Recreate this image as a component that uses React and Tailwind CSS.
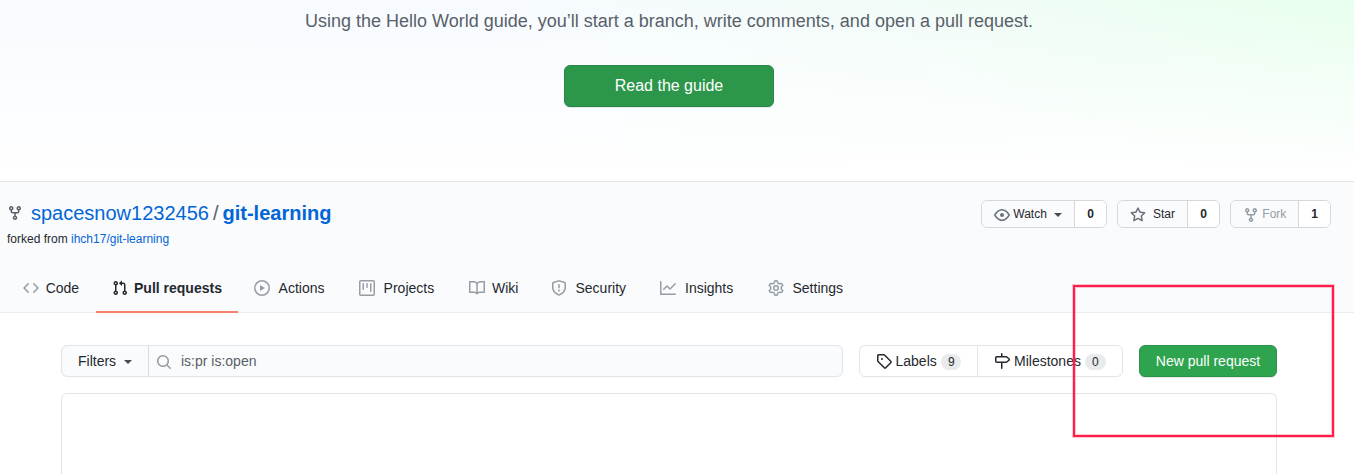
const icons = {
  fork: "M5 3.25a.75.75 0 11-1.5 0 .75.75 0 011.5 0zm0 2.122a2.25 2.25 0 10-1.5 0v.878A2.25 2.25 0 005.75 8.5h1.5v2.128a2.251 2.251 0 101.5 0V8.5h1.5a2.25 2.25 0 002.25-2.25v-.878a2.25 2.25 0 10-1.5 0v.878a.75.75 0 01-.75.75h-4.5A.75.75 0 015 6.25v-.878zm3.75 7.378a.75.75 0 11-1.5 0 .75.75 0 011.5 0zm3-8.75a.75.75 0 100-1.5.75.75 0 000 1.5z",
  code: "M4.72 3.22a.75.75 0 011.06 1.06L2.06 8l3.72 3.72a.75.75 0 11-1.06 1.06L.47 8.53a.75.75 0 010-1.06l4.25-4.25zm6.56 0a.75.75 0 10-1.06 1.06L13.94 8l-3.72 3.72a.75.75 0 101.06 1.06l4.25-4.25a.75.75 0 000-1.06l-4.25-4.25z",
  pull: "M7.177 3.073L9.573.677A.25.25 0 0110 .854v4.792a.25.25 0 01-.427.177L7.177 3.427a.25.25 0 010-.354zM3.75 2.5a.75.75 0 100 1.5.75.75 0 000-1.5zm-2.25.75a2.25 2.25 0 113 2.122v5.256a2.251 2.251 0 11-1.5 0V5.372A2.25 2.25 0 011.5 3.25zM11 2.5h-1V4h1a1 1 0 011 1v5.628a2.251 2.251 0 101.5 0V5A2.5 2.5 0 0011 2.5zm1 10.25a.75.75 0 111.5 0 .75.75 0 01-1.5 0zM3.75 12a.75.75 0 100 1.5.75.75 0 000-1.5z",
  play: "M1.5 8a6.5 6.5 0 1113 0 6.5 6.5 0 01-13 0zM8 0a8 8 0 100 16A8 8 0 008 0zM6.379 5.227A.25.25 0 006 5.442v5.117a.25.25 0 00.379.214l4.264-2.559a.25.25 0 000-.428L6.379 5.227z",
  project: "M1.75 0A1.75 1.75 0 000 1.75v12.5C0 15.216.784 16 1.75 16h12.5A1.75 1.75 0 0016 14.25V1.75A1.75 1.75 0 0014.25 0H1.75zM1.5 1.75a.25.25 0 01.25-.25h12.5a.25.25 0 01.25.25v12.5a.25.25 0 01-.25.25H1.75a.25.25 0 01-.25-.25V1.75zM11.75 3a.75.75 0 00-.75.75v7.5a.75.75 0 001.5 0v-7.5a.75.75 0 00-.75-.75zm-8.25.75a.75.75 0 011.5 0v5.5a.75.75 0 01-1.5 0v-5.5zM8 3a.75.75 0 00-.75.75v3.5a.75.75 0 001.5 0v-3.5A.75.75 0 008 3z",
  book: "M0 1.75A.75.75 0 01.75 1h4.253c1.227 0 2.317.59 3 1.501A3.744 3.744 0 0111.006 1h4.245a.75.75 0 01.75.75v10.5a.75.75 0 01-.75.75h-4.507a2.25 2.25 0 00-1.591.659l-.622.621a.75.75 0 01-1.06 0l-.622-.621A2.25 2.25 0 005.258 13H.75a.75.75 0 01-.75-.75V1.75zm8.755 3a2.25 2.25 0 012.25-2.25H14.5v9h-3.757c-.71 0-1.4.201-1.992.572l.004-7.322zm-1.504 7.324l.004-5.073-.002-2.253A2.25 2.25 0 005.003 2.5H1.5v9h3.757a3.75 3.75 0 011.994.574z",
  shield: "M7.467.133a1.75 1.75 0 011.066 0l5.25 1.68A1.75 1.75 0 0115 3.48V7c0 1.566-.32 3.182-1.303 4.682-.983 1.498-2.585 2.813-5.032 3.855a1.7 1.7 0 01-1.33 0c-2.447-1.042-4.049-2.357-5.032-3.855C1.32 10.182 1 8.566 1 7V3.48a1.75 1.75 0 011.217-1.667l5.25-1.68zm.61 1.429a.25.25 0 00-.153 0l-5.25 1.68a.25.25 0 00-.174.238V7c0 1.358.275 2.666 1.057 3.86.784 1.194 2.121 2.34 4.366 3.297a.2.2 0 00.154 0c2.245-.956 3.582-2.104 4.366-3.298C13.225 9.666 13.5 8.36 13.5 7V3.48a.25.25 0 00-.174-.237l-5.25-1.68zM9 10.5a1 1 0 11-2 0 1 1 0 012 0zm-.25-5.75a.75.75 0 10-1.5 0v3a.75.75 0 001.5 0v-3z",
  graph: "M1.5 1.75a.75.75 0 00-1.5 0v12.5c0 .414.336.75.75.75h14.5a.75.75 0 000-1.5H1.5V1.75zm14.28 2.53a.75.75 0 00-1.06-1.06L10 7.94 7.53 5.47a.75.75 0 00-1.06 0L3.22 8.72a.75.75 0 001.06 1.06L7 7.06l2.47 2.47a.75.75 0 001.06 0l5.25-5.25z",
  gear: "M7.429 1.525a6.593 6.593 0 011.142 0c.036.003.108.036.137.146l.289 1.105c.147.56.55.967.997 1.189.174.086.341.183.501.29.417.278.97.423 1.53.27l1.102-.303c.11-.03.175.016.195.046.219.31.41.641.573.989.014.031.022.11-.059.19l-.815.806c-.411.406-.562.957-.53 1.456a4.588 4.588 0 010 .582c-.032.499.119 1.05.53 1.456l.815.806c.08.08.073.159.059.19a6.494 6.494 0 01-.573.99c-.02.029-.086.074-.195.045l-1.103-.303c-.559-.153-1.112-.008-1.529.27-.16.107-.327.204-.5.29-.449.222-.851.628-.998 1.189l-.289 1.105c-.029.11-.101.143-.137.146a6.613 6.613 0 01-1.142 0c-.036-.003-.108-.037-.137-.146l-.289-1.105c-.147-.56-.55-.967-.997-1.189a4.502 4.502 0 01-.501-.29c-.417-.278-.97-.423-1.53-.27l-1.102.303c-.11.03-.175-.016-.195-.046a6.492 6.492 0 01-.573-.989c-.014-.031-.022-.11.059-.19l.815-.806c.411-.406.562-.957.53-1.456a4.587 4.587 0 010-.582c.032-.499-.119-1.05-.53-1.456l-.815-.806c-.08-.08-.073-.159-.059-.19a6.44 6.44 0 01.573-.99c.02-.029.086-.075.195-.045l1.103.303c.559.153 1.112.008 1.529-.27.16-.107.327-.204.5-.29.449-.222.851-.628.998-1.189l.289-1.105c.029-.11.101-.143.137-.146zM8 0c-.236 0-.47.01-.701.03-.743.065-1.29.615-1.458 1.261l-.29 1.106c-.017.066-.078.158-.211.224a5.994 5.994 0 00-.668.386c-.123.082-.233.09-.3.071L3.27 2.776c-.644-.177-1.392.02-1.82.63a7.977 7.977 0 00-.704 1.217c-.315.675-.111 1.422.363 1.891l.815.806c.05.048.098.147.088.294a6.084 6.084 0 000 .772c.01.147-.038.246-.088.294l-.815.806c-.474.469-.678 1.216-.363 1.891.2.428.436.835.704 1.218.428.609 1.176.806 1.82.63l1.103-.303c.066-.019.176-.011.299.071.213.143.436.272.668.386.133.066.194.158.212.224l.289 1.106c.169.646.715 1.196 1.458 1.26a8.094 8.094 0 001.402 0c.743-.064 1.29-.614 1.458-1.26l.29-1.106c.017-.066.078-.158.211-.224a5.98 5.98 0 00.668-.386c.123-.082.233-.09.3-.071l1.102.302c.644.177 1.392-.02 1.82-.63.268-.382.505-.789.704-1.217.315-.675.111-1.422-.364-1.891l-.814-.806c-.05-.048-.098-.147-.088-.294a6.1 6.1 0 000-.772c-.01-.147.039-.246.088-.294l.814-.806c.475-.469.679-1.216.364-1.891a7.992 7.992 0 00-.704-1.218c-.428-.609-1.176-.806-1.82-.63l-1.103.303c-.066.019-.176.011-.299-.071a5.991 5.991 0 00-.668-.386c-.133-.066-.194-.158-.212-.224L10.16 1.29C9.99.645 9.444.095 8.701.031A8.094 8.094 0 008 0zm1.5 8a1.5 1.5 0 11-3 0 1.5 1.5 0 013 0zM11 8a3 3 0 11-6 0 3 3 0 016 0z",
  eye: "M1.679 7.932c.412-.621 1.242-1.75 2.366-2.717C5.175 4.242 6.527 3.5 8 3.5c1.473 0 2.824.742 3.955 1.715 1.124.967 1.954 2.096 2.366 2.717a.119.119 0 010 .136c-.412.621-1.242 1.75-2.366 2.717C10.825 11.758 9.473 12.5 8 12.5c-1.473 0-2.824-.742-3.955-1.715C2.92 9.818 2.09 8.69 1.679 8.068a.119.119 0 010-.136zM8 2c-1.981 0-3.67.992-4.933 2.078C1.797 5.169.88 6.423.43 7.1a1.619 1.619 0 000 1.798c.45.678 1.367 1.932 2.637 3.024C4.329 13.008 6.019 14 8 14c1.981 0 3.67-.992 4.933-2.078 1.27-1.091 2.187-2.345 2.637-3.023a1.619 1.619 0 000-1.798c-.45-.678-1.367-1.932-2.637-3.023C11.671 2.992 9.981 2 8 2zm0 8a2 2 0 100-4 2 2 0 000 4z",
  star: "M8 .25a.75.75 0 01.673.418l1.882 3.815 4.21.612a.75.75 0 01.416 1.279l-3.046 2.97.719 4.192a.75.75 0 01-1.088.791L8 12.347l-3.766 1.98a.75.75 0 01-1.088-.79l.72-4.194L.818 6.374a.75.75 0 01.416-1.28l4.21-.611L7.327.668A.75.75 0 018 .25zm0 2.445L6.615 5.5a.75.75 0 01-.564.41l-3.097.45 2.24 2.184a.75.75 0 01.216.664l-.528 3.084 2.769-1.456a.75.75 0 01.698 0l2.77 1.456-.53-3.084a.75.75 0 01.216-.664l2.24-2.183-3.096-.45a.75.75 0 01-.564-.41L8 2.694v.001z",
  search: "M11.5 7a4.499 4.499 0 11-8.998 0A4.499 4.499 0 0111.5 7zm-.82 4.74a6 6 0 111.06-1.06l3.04 3.04a.75.75 0 11-1.06 1.06l-3.04-3.04z",
  tag: "M2.5 7.775V2.75a.25.25 0 01.25-.25h5.025a.25.25 0 01.177.073l6.25 6.25a.25.25 0 010 .354l-5.025 5.025a.25.25 0 01-.354 0l-6.25-6.25a.25.25 0 01-.073-.177zm-1.5 0V2.75C1 1.784 1.784 1 2.75 1h5.025c.464 0 .91.184 1.238.513l6.25 6.25a1.75 1.75 0 010 2.474l-5.026 5.026a1.75 1.75 0 01-2.474 0l-6.25-6.25A1.75 1.75 0 011 7.775zM6 5a1 1 0 100 2 1 1 0 000-2z",
  milestone: "M7.75 0a.75.75 0 01.75.75V3h3.634c.414 0 .814.147 1.13.414l2.07 1.75a1.75 1.75 0 010 2.672l-2.07 1.75a1.75 1.75 0 01-1.13.414H8.5v5.25a.75.75 0 11-1.5 0V10H2.75A1.75 1.75 0 011 8.25v-3.5C1 3.784 1.784 3 2.75 3H7V.75A.75.75 0 017.75 0zm0 8.5h4.384a.25.25 0 00.161-.06l2.07-1.75a.25.25 0 000-.38l-2.07-1.75a.25.25 0 00-.161-.06H2.75a.25.25 0 00-.25.25v3.5c0 .138.112.25.25.25h5z",
};

function Icon({ name, className = "" }) {
  return (
    <svg viewBox="0 0 16 16" fill="currentColor" className={`size-4 shrink-0 ${className}`}>
      <path fillRule="evenodd" d={icons[name]} />
    </svg>
  );
}

function Caret({ className = "" }) {
  return (
    <svg viewBox="0 0 8 4" fill="currentColor" className={`h-1 w-2 shrink-0 ${className}`}>
      <path d="M0 0h8L4 4z" />
    </svg>
  );
}

const tabs = [
  { icon: "code", label: "Code", size: "w-[89px]", gap: "gap-[6.7px]" },
  { icon: "pull", label: "Pull requests", size: "w-[142px]", gap: "gap-[6px]", active: true },
  { icon: "play", label: "Actions", size: "w-[105px]", gap: "gap-[8.6px]" },
  { icon: "project", label: "Projects", size: "w-[110px]", gap: "gap-[8.6px]" },
  { icon: "book", label: "Wiki", size: "w-[82px]", gap: "gap-[7px]" },
  { icon: "shield", label: "Security", size: "w-[109px]", gap: "gap-[8.5px]" },
  { icon: "graph", label: "Insights", size: "w-[108px]", gap: "gap-[9px]" },
  { icon: "gear", label: "Settings", size: "w-[107px]", gap: "gap-[8.5px]" },
];

function Tab({ icon, label, size, gap, active }) {
  return (
    <a
      className={`flex h-[50px] shrink-0 items-center border-b-2 pl-4 pt-[2px] text-sm whitespace-nowrap ${size} ${gap} ${
        active ? "border-[#f9826c] font-bold" : "border-transparent"
      }`}
    >
      <Icon name={icon} className={active ? "text-[#24292e]" : "text-[#959da5]"} />
      {label}
    </a>
  );
}

function CountButton({ size, count, children }) {
  return (
    <div className={`flex h-7 overflow-hidden rounded-md border border-[#d5d8da] text-xs ${size}`}>
      <div className="flex flex-1 items-center bg-[#fafbfc] pl-3">{children}</div>
      <div className="flex w-8 items-center justify-center border-l border-[#d5d8da] bg-white font-bold">{count}</div>
    </div>
  );
}

function Pill({ children, size }) {
  return (
    <span className={`mt-0.5 flex h-4 items-center justify-center rounded-full bg-[#e8eaeb] text-xs ${size}`}>
      {children}
    </span>
  );
}

export default function App() {
  return (
    <div className="relative flex h-[474px] w-[1354px] flex-col overflow-hidden bg-white font-['Liberation_Sans',Arial,sans-serif] text-[#24292e]">
      <section className="flex h-[181px] shrink-0 flex-col items-center bg-[linear-gradient(to_bottom,rgba(255,255,255,0),#fff_175px),linear-gradient(80deg,#f7fbff_0%,#f7fbff_40%,#f2fcf8_68%,#e8ffee_98%)] pr-4 pt-2">
        <p className="text-lg leading-[27px] text-[#586069]">
          Using the Hello World guide, you’ll start a branch, write comments, and open a pull request.
        </p>
        <a className="mt-[30px] flex h-[42px] w-[210px] items-center justify-center rounded-md border border-[#2a8646] bg-[#2c974b] text-base text-white shadow-[0_1px_0_rgba(27,31,35,0.1)]">
          Read the guide
        </a>
      </section>

      <header className="flex h-[132px] shrink-0 flex-col border-y border-t-[#e1e4e8] border-b-[#eaecef] bg-[#fafbfc] pl-[7px]">
        <div className="flex h-[81px] shrink-0 justify-between pr-[23px] pt-[17px]">
          <div>
            <h1 className="flex h-7 items-center text-xl leading-7">
              <Icon name="fork" className="text-[#586069]" />
              <a className="ml-2 text-[#0366d6]">spacesnow1232456</a>
              <span className="ml-1 text-[#586069]">/</span>
              <a className="ml-1 font-bold text-[#0366d6]">git-learning</a>
            </h1>
            <p className="mt-[3px] text-xs leading-[18px]">
              forked from <a className="text-[#0366d6]">ihch17/git-learning</a>
            </p>
          </div>
          <div className="flex gap-[10px] pt-px">
            <CountButton size="w-[126px]" count="0">
              <Icon name="eye" className="mt-px text-[#6a737d]" />
              <span className="ml-[3.3px]">Watch</span>
              <Caret className="ml-[7px] mt-px text-[#444d56]" />
            </CountButton>
            <CountButton size="w-[103px]" count="0">
              <Icon name="star" className="mt-px text-[#6a737d]" />
              <span className="ml-[7px]">Star</span>
            </CountButton>
            <CountButton size="w-[101px]" count="1">
              <Icon name="fork" className="mt-px text-[#959da5]" />
              <span className="ml-[3.3px] text-[#959da5]">Fork</span>
            </CountButton>
          </div>
        </div>
        <nav className="-mb-px flex shrink-0">
          {tabs.map((tab) => (
            <Tab key={tab.label} {...tab} />
          ))}
        </nav>
      </header>

      <main className="flex flex-1 flex-col pl-[61px] pr-[77px] pt-8">
        <div className="flex h-8 text-sm">
          <div className="flex w-[782px] overflow-hidden rounded-md border border-[#e1e4e8] bg-[#fafbfc]">
            <div className="-my-px -ml-px flex w-[88px] items-center rounded-l-md border border-[#d9dcdf] pl-4">
              Filters
              <Caret className="ml-2 mt-px text-[#444d56]" />
            </div>
            <div className="flex flex-1 items-center pl-[7px] text-[#586069]">
              <Icon name="search" className="mt-px text-[#959da5]" />
              <span className="ml-[9px]">is:pr is:open</span>
            </div>
          </div>
          <div className="ml-4 flex w-[264px] rounded-md border border-[#e1e4e8]">
            <a className="flex w-[118px] items-center border-r border-[#e1e4e8] pl-4">
              <Icon name="tag" />
              <span className="ml-[3.5px] mr-[4.5px]">Labels</span>
              <Pill size="w-5">9</Pill>
            </a>
            <a className="flex flex-1 items-center pl-4">
              <Icon name="milestone" />
              <span className="ml-1 mr-1">Milestones</span>
              <Pill size="w-[21px]">0</Pill>
            </a>
          </div>
          <a className="ml-4 flex w-[138px] items-center justify-center rounded-md border border-[#2b934a] bg-[#2ea44f] text-white shadow-[0_1px_0_rgba(27,31,35,0.1)]">
            New pull request
          </a>
        </div>
        <div className="mt-4 flex-1 rounded-t-md border border-b-0 border-[#e1e4e8]" />
      </main>

      {/* Highlight drawn around the new pull request action */}
      <div className="absolute left-[1073px] top-[285px] h-[152px] w-[261px] border-2 border-[#ff1f4b] shadow-[0_0_0_1px_rgba(255,31,75,0.25),inset_0_0_0_1px_rgba(255,31,75,0.25)]" />
    </div>
  );
}
